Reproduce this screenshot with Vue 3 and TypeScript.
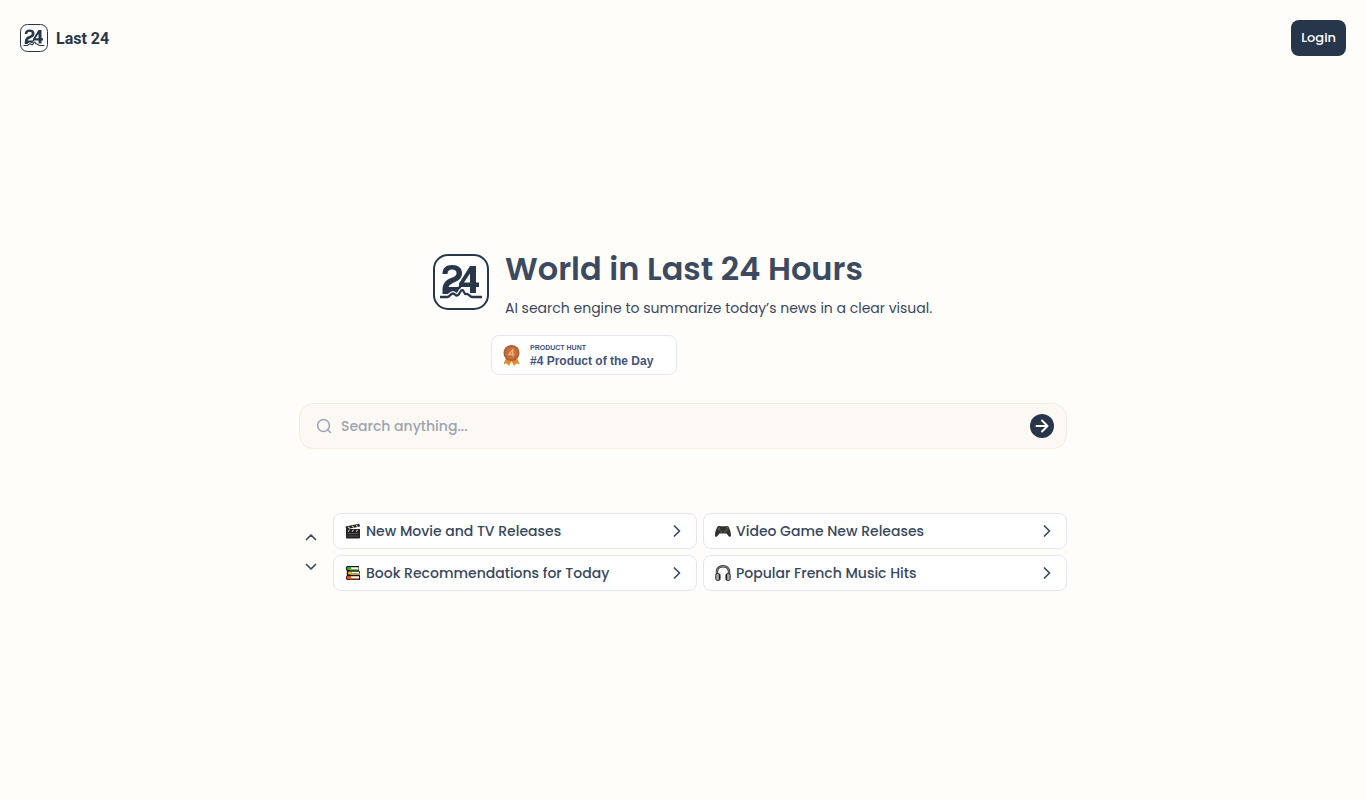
<script setup lang="ts">
import { ref } from 'vue'

interface Topic {
  icon: 'clapper' | 'gamepad' | 'books' | 'headphones'
  label: string
}

const query = ref('')
const topics: Topic[] = [
  { icon: 'clapper', label: 'New Movie and TV Releases' },
  { icon: 'gamepad', label: 'Video Game New Releases' },
  { icon: 'books', label: 'Book Recommendations for Today' },
  { icon: 'headphones', label: 'Popular French Music Hits' },
]
</script>

<template>
  <div class="page">
    <svg class="defs" aria-hidden="true">
      <symbol id="brand-mark" viewBox="0 0 56 56">
        <rect x="1" y="1" width="54" height="54" rx="14" fill="#fff" stroke="#27364b" stroke-width="2" />
        <path d="M9.500 20C9.500 14 13 11 19 11C25.500 11 29 14 29 19C29 23.500 26.500 26 22 28C18 30 16 31 15.500 33H25L28 30V39L24 40L20 37L15 40H9.500V36C9.500 29 13 26 18 24C22 22.500 23.500 21.500 23.500 19C23.500 17 22 15.500 19 15.500C16 15.500 14.500 17 14.500 20Z" fill="#27364b" />
        <path d="M37 12H43V28.500H46V33H43V39H37V33H26V29.500ZM37 19.500L31 28.500H37Z" fill="#27364b" fill-rule="evenodd" />
        <path d="M7 43H14C17 43 17.500 39.500 20 39.500C22.500 39.500 22.500 43 25 41C27.500 39 27.500 35.500 29.500 36C31.500 37 30.500 40.500 33.500 40C36 39.500 36 43 40 43H49" fill="none" stroke="#fff" stroke-width="4.6" />
        <path d="M7 43H14C17 43 17.500 39.500 20 39.500C22.500 39.500 22.500 43 25 41C27.500 39 27.500 35.500 29.500 36C31.500 37 30.500 40.500 33.500 40C36 39.500 36 43 40 43H49" fill="none" stroke="#27364b" stroke-width="2.3" />
      </symbol>
    </svg>

    <header class="topbar">
      <a class="brand" href="#">
        <svg class="brand-icon" aria-hidden="true"><use href="#brand-mark" /></svg>
        <span>Last 24</span>
      </a>
      <button class="login" type="button">Login</button>
    </header>

    <main class="content">
      <section class="hero">
        <svg class="hero-icon" aria-hidden="true"><use href="#brand-mark" /></svg>
        <div>
          <h1>World in Last 24 Hours</h1>
          <p>AI search engine to summarize today’s news in a clear visual.</p>
        </div>
      </section>

      <div class="award-row">
        <a class="award" href="#">
          <svg width="17" height="21" viewBox="0 0 17 21" aria-hidden="true">
            <path d="M3 13L.5 19L4 18.500L6 21L8.500 16L11 21L13 18.500L16.500 19L14 13Z" fill="#e58a22" />
            <circle cx="8.500" cy="8" r="8" fill="#ae5d35" />
            <circle cx="8.500" cy="8" r="6.300" fill="#c27040" />
            <path d="M9.800 11.500V4.800L5.800 9.600H11.400" fill="none" stroke="#f3ac72" stroke-width="1.500" />
          </svg>
          <span class="award-text">
            <small>PRODUCT HUNT</small>
            <strong>#4 Product of the Day</strong>
          </span>
        </a>
      </div>

      <form class="search" role="search" @submit.prevent>
        <svg width="16" height="16" viewBox="0 0 16 16" fill="none" stroke="#9ca6b4" stroke-width="1.500" stroke-linecap="round" aria-hidden="true">
          <circle cx="7.500" cy="7.500" r="5.900" />
          <path d="M11.800 11.800L14.500 14.500" />
        </svg>
        <input v-model="query" type="text" aria-label="Search anything" placeholder="Search anything..." />
        <button type="submit" aria-label="Search">
          <svg width="24" height="24" viewBox="0 0 24 24" fill="none" stroke="#fff" stroke-width="2" stroke-linecap="round" stroke-linejoin="round" aria-hidden="true">
            <path d="M6.500 12H17.500M12 6.500L17.500 12L12 17.500" />
          </svg>
        </button>
      </form>

      <section class="suggestions" aria-label="Suggested topics">
        <div class="pager">
          <button type="button" aria-label="Previous topics">
            <svg width="12" height="8" viewBox="0 0 12 8" aria-hidden="true"><path d="M1.500 6.500L6 2L10.500 6.500" /></svg>
          </button>
          <button type="button" aria-label="Next topics">
            <svg width="12" height="8" viewBox="0 0 12 8" aria-hidden="true"><path d="M1.500 1.500L6 6L10.500 1.500" /></svg>
          </button>
        </div>
        <div class="topics">
          <button v-for="topic in topics" :key="topic.label" class="topic" type="button">
            <svg v-if="topic.icon === 'clapper'" width="16" height="16" viewBox="0 0 16 16" aria-hidden="true">
              <path d="M1 6H15V14.500Q15 15.500 14 15.500H2Q1 15.500 1 14.500Z" fill="#202020" />
              <path d="M.5 3.500L14.300 .7L15 3.500L1.200 6.300Z" fill="#202020" />
              <path d="M3 3.800L4.700 5.200M7 3L8.700 4.400M11 2.200L12.700 3.600" stroke="#ddd" stroke-width="1.100" />
              <path d="M4.500 6.700L3.200 8.700M8.500 6.700L7.200 8.700M12.500 6.700L11.200 8.700" stroke="#ccc" stroke-width="1.100" />
              <path d="M2.500 10.500H13.500M2.500 13H13.500" stroke="#6f6f6f" stroke-width=".7" />
            </svg>
            <svg v-else-if="topic.icon === 'gamepad'" width="16" height="16" viewBox="0 0 16 16" aria-hidden="true">
              <path d="M3.500 3L6 3.300H10L12.500 3C14 3 16 9 16 12C16 14 14.500 14.500 13.500 13L11.500 10.500H4.500L2.500 13C1.500 14.500 0 14 0 12C0 9 2 3 3.500 3Z" fill="#303030" />
              <circle cx="4" cy="6" r="1.400" fill="#555" />
              <circle cx="6.200" cy="8.600" r="1.200" fill="#505050" />
              <circle cx="9.900" cy="8.600" r="1.200" fill="#505050" />
              <circle cx="12" cy="4.700" r=".6" fill="#b89c28" />
              <circle cx="10.800" cy="6" r=".6" fill="#397eae" />
              <circle cx="13.200" cy="6" r=".6" fill="#b84b40" />
              <circle cx="12" cy="7.200" r=".6" fill="#549646" />
            </svg>
            <svg v-else-if="topic.icon === 'books'" width="16" height="16" viewBox="0 0 16 16" aria-hidden="true">
              <path d="M2.500 1H14V2L13.500 2.500V4.500L14 5V6L15 6.500V7.500L14.500 8V10L15 10.500V15H2.500C.5 15 .5 11 2 10.500C1.500 9 1.500 7.500 2 6C.5 5 .5 1.500 2.500 1Z" fill="#171717" />
              <path d="M5.500 2.300H13V4H5.500ZM6.500 6.800H14V8.500H6.500ZM5.500 11.300H14V13H5.500Z" fill="#fff" />
              <path d="M3 2H5.500V5H3C1.500 5 1.500 2.500 3 2Z" fill="#27b32c" />
              <path d="M4 6.500H6.500V9.500H4C2.500 9 2.500 7 4 6.500Z" fill="#f4b522" />
              <path d="M2.500 11H5.500V14.300H2.500C1.300 13.800 1.300 11.500 2.500 11Z" fill="#f04c17" />
              <path d="M5 4.700H13" stroke="#7ddb31" stroke-width="1.200" />
              <path d="M6 9.200H14" stroke="#f1c258" stroke-width="1.200" />
              <path d="M5 13.700H14" stroke="#f37b3d" stroke-width="1.200" />
            </svg>
            <svg v-else width="16" height="16" viewBox="0 0 16 16" fill="none" aria-hidden="true">
              <path d="M2 10V6.500C2 3 4.500 1.300 8 1.300S14 3 14 6.500V10" stroke="#262626" stroke-width="2.400" />
              <path d="M2 9V6.500C2 3 4.500 1.300 8 1.300S14 3 14 6.500V9" stroke="#a4a4a4" stroke-width=".9" />
              <rect x=".8" y="8.500" width="4.200" height="7" rx="1.800" fill="#aaa" stroke="#262626" />
              <rect x="11" y="8.500" width="4.200" height="7" rx="1.800" fill="#aaa" stroke="#262626" />
              <path d="M4.500 9V15M11.500 9V15" stroke="#222" stroke-width="1.300" />
            </svg>
            <span>{{ topic.label }}</span>
            <svg class="chevron" width="8" height="12" viewBox="0 0 8 12" aria-hidden="true"><path d="M1.500 1L6.500 6L1.500 11" /></svg>
          </button>
        </div>
      </section>
    </main>
  </div>
</template>

<style>
body {
  margin: 0;
  background: #fffdfa;
}
</style>

<style scoped>
.page {
  min-height: 100vh;
  box-sizing: border-box;
  background: #fffdfa;
  color: #38475d;
  font-family: Poppins, Inter, "Open Sans", sans-serif;
}
.defs {
  display: block;
  width: 0;
  height: 0;
}
button,
input {
  font: inherit;
  color: inherit;
}
button {
  cursor: pointer;
}
.topbar {
  display: flex;
  align-items: center;
  justify-content: space-between;
  padding: 20px;
}
.brand {
  display: flex;
  align-items: center;
  gap: 8px;
  color: #27364b;
  font: 700 16px/26px Roboto, sans-serif;
  text-decoration: none;
}
.brand span {
  padding-top: 2px;
}
.brand-icon {
  width: 28px;
  height: 28px;
}
.login {
  height: 36px;
  padding: 0 10px;
  border: 0;
  border-radius: 8px;
  background: #27364b;
  color: #fff;
  font-size: 13px;
  font-weight: 500;
}
.content {
  max-width: 768px;
  margin: 0 auto;
  padding: 172px 16px 32px;
}
.hero {
  display: flex;
  align-items: flex-start;
  gap: 16px;
  max-width: 500px;
  margin: 0 auto;
  padding-top: 6px;
}
.hero-icon {
  flex: none;
  width: 56px;
  height: 56px;
}
.hero h1 {
  margin: -5px 0 0;
  color: #3b4a60;
  font-size: 32px;
  line-height: 40px;
  font-weight: 600;
  white-space: nowrap;
}
.hero p {
  margin: 9px 0 0;
  font-size: 14px;
  line-height: 20px;
  white-space: nowrap;
}
.award-row {
  display: flex;
  max-width: 384px;
  margin: 17px auto 0;
}
.award {
  box-sizing: border-box;
  display: flex;
  align-items: center;
  gap: 10px;
  width: 186px;
  height: 40px;
  padding: 0 11px;
  border: 1px solid #e5e9f3;
  border-radius: 8px;
  background: #fff;
  color: #43537b;
  font-family: "Liberation Sans", Arial, sans-serif;
  text-decoration: none;
}
.award-text {
  display: flex;
  flex-direction: column;
  padding-top: 2px;
  white-space: nowrap;
}
.award small {
  font-size: 7px;
  line-height: 10px;
  font-weight: 700;
}
.award strong {
  font-size: 12px;
  line-height: 16px;
}
.search {
  box-sizing: border-box;
  display: flex;
  align-items: center;
  gap: 9px;
  height: 46px;
  margin-top: 28px;
  padding: 0 12px 0 16px;
  border: 1px solid #f5ebe0;
  border-radius: 14px;
  background: #fcf9f5;
}
.search input {
  flex: 1;
  min-width: 0;
  padding: 0;
  border: 0;
  outline: 0;
  background: transparent;
  font-size: 14px;
  font-weight: 500;
}
.search input::placeholder {
  color: #9ca3af;
  opacity: 1;
}
.search button {
  width: 24px;
  height: 24px;
  padding: 0;
  border: 0;
  border-radius: 50%;
  background: #27364b;
}
.search button svg {
  display: block;
}
.suggestions {
  display: flex;
  align-items: center;
  gap: 10px;
  margin-top: 64px;
}
.pager {
  display: flex;
  flex-direction: column;
  gap: 6px;
}
.pager button {
  display: flex;
  align-items: center;
  justify-content: center;
  width: 24px;
  height: 24px;
  padding: 0;
  border: 0;
  background: transparent;
}
.pager svg,
.chevron {
  fill: none;
  stroke: #3a4a60;
  stroke-width: 1.7;
  stroke-linecap: round;
  stroke-linejoin: round;
}
.topics {
  flex: 1;
  display: grid;
  grid-template-columns: repeat(2, minmax(0, 1fr));
  gap: 6px;
}
.topic {
  display: flex;
  align-items: center;
  gap: 5px;
  height: 36px;
  padding: 0 15px 0 11px;
  border: 1px solid #e4e7ee;
  border-radius: 8px;
  background: #fff;
  font-size: 14px;
  font-weight: 500;
  text-align: left;
}
.topic > svg {
  flex: none;
}
.topic span {
  flex: 1;
  min-width: 0;
  white-space: nowrap;
}
@media (max-width: 700px) {
  .content {
    padding-top: 72px;
  }
  .hero h1,
  .hero p {
    white-space: normal;
  }
  .topics {
    grid-template-columns: minmax(0, 1fr);
  }
}
</style>
